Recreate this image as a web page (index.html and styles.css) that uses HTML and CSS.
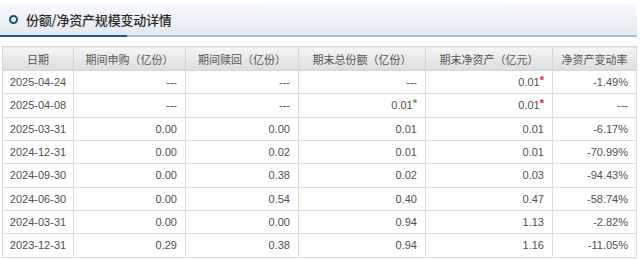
FILE: index.html
```html
<!DOCTYPE html>
<html lang="zh-CN">
<head>
    <meta charset="UTF-8">
    <meta name="viewport" content="width=device-width, initial-scale=1.0">
    <title>份额/净资产规模变动详情</title>
    <link rel="stylesheet" href="styles.css">
</head>
<body>
    <div class="panel">
        <div class="title-bar">
            <span class="ring"></span>
            <h2>份额/净资产规模变动详情</h2>
        </div>
        <div class="title-line"></div>

        <table class="scale-table">
            <colgroup>
                <col class="c-date">
                <col class="c-buy">
                <col class="c-sell">
                <col class="c-share">
                <col class="c-asset">
                <col class="c-rate">
            </colgroup>
            <thead>
                <tr>
                    <th>日期</th>
                    <th>期间申购（亿份）</th>
                    <th>期间赎回（亿份）</th>
                    <th>期末总份额（亿份）</th>
                    <th>期末净资产（亿元）</th>
                    <th>净资产变动率</th>
                </tr>
            </thead>
            <tbody>
                <tr>
                    <td class="date">2025-04-24</td>
                    <td>---</td>
                    <td>---</td>
                    <td>---</td>
                    <td>0.01<span class="mark red">*</span></td>
                    <td>-1.49%</td>
                </tr>
                <tr>
                    <td class="date">2025-04-08</td>
                    <td>---</td>
                    <td>---</td>
                    <td>0.01<span class="mark green">*</span></td>
                    <td>0.01<span class="mark red">*</span></td>
                    <td>---</td>
                </tr>
                <tr>
                    <td class="date">2025-03-31</td>
                    <td>0.00</td>
                    <td>0.00</td>
                    <td>0.01</td>
                    <td>0.01</td>
                    <td>-6.17%</td>
                </tr>
                <tr>
                    <td class="date">2024-12-31</td>
                    <td>0.00</td>
                    <td>0.02</td>
                    <td>0.01</td>
                    <td>0.01</td>
                    <td>-70.99%</td>
                </tr>
                <tr>
                    <td class="date">2024-09-30</td>
                    <td>0.00</td>
                    <td>0.38</td>
                    <td>0.02</td>
                    <td>0.03</td>
                    <td>-94.43%</td>
                </tr>
                <tr>
                    <td class="date">2024-06-30</td>
                    <td>0.00</td>
                    <td>0.54</td>
                    <td>0.40</td>
                    <td>0.47</td>
                    <td>-58.74%</td>
                </tr>
                <tr>
                    <td class="date">2024-03-31</td>
                    <td>0.00</td>
                    <td>0.00</td>
                    <td>0.94</td>
                    <td>1.13</td>
                    <td>-2.82%</td>
                </tr>
                <tr>
                    <td class="date">2023-12-31</td>
                    <td>0.29</td>
                    <td>0.38</td>
                    <td>0.94</td>
                    <td>1.16</td>
                    <td>-11.05%</td>
                </tr>
            </tbody>
        </table>
    </div>
</body>
</html>
```

FILE: styles.css
```css
body {
    margin: 0;
    padding: 0;
    background-color: #ffffff;
    font-family: "Liberation Sans", Arial, "Noto Sans CJK SC", sans-serif;
    color: #505050;
    overflow: hidden;
}
.panel {
    width: 637px;
    padding-top: 4px;
}
.title-bar {
    display: flex;
    align-items: center;
    height: 31px;
    padding-left: 9px;
    background: linear-gradient(to bottom, #f8fafc, #e1eaf2);
    border-top-right-radius: 6px;
}
.ring {
    width: 5px;
    height: 5px;
    border: 2px solid #1d4f6e;
    border-radius: 50%;
    margin-right: 8px;
}
.title-bar h2 {
    margin: 0;
    font-family: "Noto Sans CJK SC", sans-serif;
    font-size: 13px;
    font-weight: 500;
    color: #2b2b2b;
    letter-spacing: -0.2px;
}
.title-line {
    height: 2px;
    background: linear-gradient(to right, #1f5677 127px, #9dc3d7 127px);
}
.scale-table {
    margin: 9px 0 0 2px;
    width: 634px;
    border-collapse: collapse;
    table-layout: fixed;
    font-size: 11px;
}
.c-date { width: 71px; }
.c-buy { width: 112px; }
.c-sell { width: 113px; }
.c-share { width: 127px; }
.c-asset { width: 127px; }
.c-rate { width: 84px; }
.scale-table th {
    height: 23px;
    padding: 0;
    font-family: "Noto Sans CJK SC", sans-serif;
    font-weight: normal;
    font-size: 11px;
    color: #555;
    background: linear-gradient(to bottom, #f6f6f6, #dcdcdc);
    border: 1px solid #d6d6d6;
    text-align: center;
}
.scale-table td {
    height: 22.33px;
    padding: 0 8px 0 0;
    border: 1px solid #dcdcdc;
    text-align: right;
    white-space: nowrap;
}
.scale-table td.date {
    text-align: center;
    padding: 0;
}
.mark {
    font-size: 11px;
    font-weight: bold;
    vertical-align: 2px;
    line-height: 0;
}
.mark.red { color: #e0262b; }
.mark.green { color: #3aa43a; }
```
